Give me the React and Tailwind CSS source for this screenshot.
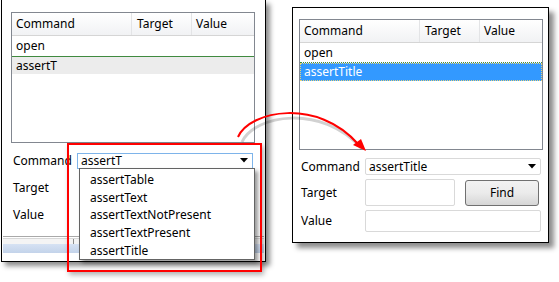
import React from "react";

const font = "font-['Segoe_UI','Noto_Sans',sans-serif]";

function DownArrow() {
  return (
    <svg width="8" height="5" viewBox="0 0 8 5" className="shrink-0">
      <path d="M0 0 L8 0 L4 4.5 Z" fill="#000" />
    </svg>
  );
}

function Table({ rows }) {
  return (
    <div className="w-[244px] h-full border border-[#828790] bg-white flex flex-col">
      <div className="flex h-[23px] border-b border-[#d5d5d5] bg-gradient-to-b from-white to-[#f1f2f4] shrink-0">
        <div className="w-[120px] border-r border-[#e3e4e6] pl-[4px] flex items-center">Command</div>
        <div className="w-[60px] border-r border-[#e3e4e6] pl-[5px] flex items-center">Target</div>
        <div className="flex-1 pl-[4px] flex items-center">Value</div>
      </div>
      {rows}
    </div>
  );
}

function Label({ children }) {
  return <div className="w-[66px] pl-[2px] shrink-0">{children}</div>;
}

export default function App() {
  const items = ["assertTable", "assertText", "assertTextNotPresent", "assertTextPresent", "assertTitle"];

  return (
    <div className={`relative w-[559px] h-[282px] bg-white overflow-hidden flex items-start text-[12px] leading-none text-black ${font}`}>
      {/* Left window (before) */}
      <div className="relative ml-[1px] w-[265px] h-[262px] border-x border-b border-black bg-white shadow-[4px_4px_5px_rgba(0,0,0,0.45)] flex flex-col">
        <div className="pt-[12px] px-[9px] h-[143px] shrink-0">
          <Table
            rows={
              <>
                <div className="h-[20px] pl-[4px] flex items-center shrink-0">open</div>
                <div className="h-[1px] bg-[#3f8a3f] shrink-0" />
                <div className="h-[17px] pl-[4px] flex items-center bg-[#ececec] shrink-0">assertT</div>
              </>
            }
          />
        </div>
        <div className="mt-[4px] px-[9px] flex flex-col">
          <div className="h-[27px] flex items-center">
            <Label>Command</Label>
            <div className="w-[176px] h-[16px] border border-[#7eb4ea] bg-white flex items-center justify-between pl-[3px] pr-[4px]">
              <span>assertT</span>
              <DownArrow />
            </div>
          </div>
          <div className="h-[27px] flex items-center">
            <Label>Target</Label>
          </div>
          <div className="h-[27px] flex items-center">
            <Label>Value</Label>
          </div>
        </div>
        <div className="mt-[8px] mx-[1px] flex flex-col">
          <div className="h-[1px] bg-[#a9a9a9]" />
          <div className="h-[1px] bg-[#d8d8d8] mt-[1px]" />
          <div className="h-[5px] bg-[#f4f4f4] flex">
            <div className="ml-[70px] w-[1px] h-[5px] bg-[#8c8c8c]" />
          </div>
          <div className="h-[9px] bg-gradient-to-b from-[#d6e2f3] to-[#c3d3ea]" />
        </div>

        {/* Dropdown list */}
        <div className="absolute left-[77px] top-[168px] w-[176px] h-[92px] bg-white border border-[#646464] shadow-[3px_3px_4px_rgba(0,0,0,0.4)] flex flex-col pt-[2px]">
          {items.map((t) => (
            <div key={t} className="h-[17.75px] shrink-0 pl-[10px] flex items-center">
              {t}
            </div>
          ))}
        </div>
      </div>

      {/* Right window (after) */}
      <div className="ml-[26px] mt-[7px] w-[257px] h-[236px] border border-black bg-white shadow-[5px_5px_5px_rgba(0,0,0,0.45)] flex flex-col px-[6px] pt-[11px]">
        <div className="h-[131px] shrink-0">
          <Table
            rows={
              <>
                <div className="h-[19px] pl-[4px] flex items-center shrink-0">open</div>
                <div className="h-[1px] border-t border-dotted border-[#3f8a3f] shrink-0" />
                <div className="h-[18px] pl-[3px] flex items-center bg-[#3399ff] text-white border border-dotted border-[#e8d27a] shrink-0">
                  assertTitle
                </div>
              </>
            }
          />
        </div>
        <div className="mt-[8px] h-[17px] flex items-center">
          <Label>Command</Label>
          <div className="w-[176px] h-[17px] border border-[#d9d9d9] rounded-[2px] bg-white flex items-center justify-between pl-[3px] pr-[4px]">
            <span>assertTitle</span>
            <DownArrow />
          </div>
        </div>
        <div className="mt-[4px] h-[27px] flex items-center">
          <Label>Target</Label>
          <div className="w-[90px] h-[27px] border border-[#d9d9d9] rounded-[2px] bg-white" />
          <button className="ml-[10px] w-[74px] h-[26px] border border-[#707070] rounded-[3px] bg-gradient-to-b from-[#f2f2f2] via-[#ebebeb] to-[#d6d6d6] text-[12px]">
            Find
          </button>
        </div>
        <div className="mt-[4px] h-[22px] flex items-center">
          <Label>Value</Label>
          <div className="w-[176px] h-[22px] border border-[#d9d9d9] rounded-[2px] bg-white" />
        </div>
      </div>

      {/* Red highlight box */}
      <div className="absolute left-[67px] top-[143px] w-[195px] h-[129px] border-2 border-[#ff0000] shadow-[2px_3px_5px_rgba(0,0,0,0.3)]" />

      {/* Curved arrow */}
      <svg className="absolute left-0 top-0 pointer-events-none" width="559" height="282">
        <path d="M240 139 C 252 112, 320 100, 360 146" fill="none" stroke="rgba(0,0,0,0.18)" strokeWidth="3" transform="translate(2,3)" />
        <path d="M238 137 C 250 110, 318 98, 358 144" fill="none" stroke="#ff0000" strokeWidth="2" />
        <path d="M366 151 L353 145 L361 139 Z" fill="#ff0000" />
      </svg>
    </div>
  );
}
